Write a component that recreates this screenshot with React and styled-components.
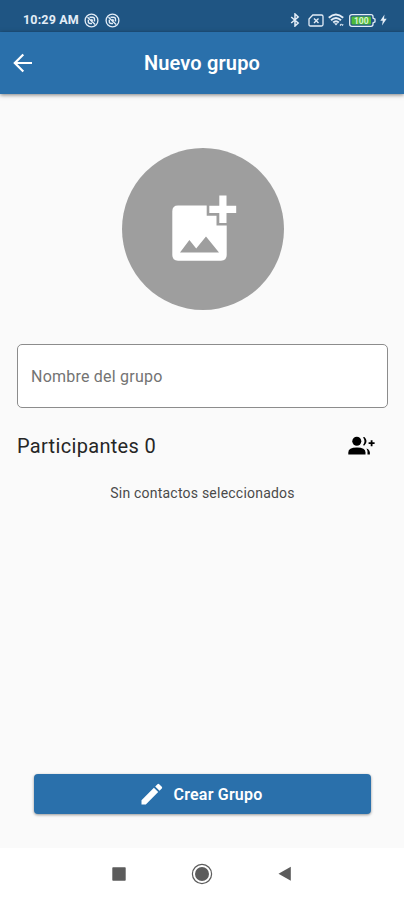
import React from "react";
import styled, { createGlobalStyle } from "styled-components";

const GlobalStyle = createGlobalStyle`
    * {
        box-sizing: border-box;
    }

    body {
        margin: 0;
        background: #fafafa;
        font-family: Roboto, "Liberation Sans", sans-serif;
    }
`;

const Screen = styled.div`
    display: flex;
    flex-direction: column;
    width: 100%;
    height: 900px;
    background: #fafafa;
    overflow: hidden;
`;

const StatusBar = styled.div`
    display: flex;
    align-items: center;
    justify-content: space-between;
    flex: none;
    height: 32px;
    padding: 8px 17px 0 23px;
    background: #1f5583;
    color: #e3edf7;
`;

const StatusGroup = styled.div`
    display: flex;
    align-items: center;
    gap: ${props => props.gap}px;
`;

const Time = styled.span`
    font-size: 12.5px;
    font-weight: 700;
    line-height: 16px;
    letter-spacing: 0.15px;
`;

const Header = styled.header`
    display: grid;
    grid-template-columns: 46px 1fr 46px;
    align-items: center;
    flex: none;
    height: 62px;
    background: #2a70ab;
    box-shadow: 0 1px 4px rgba(0, 0, 0, 0.5);
    color: white;
`;

const IconButton = styled.button`
    display: flex;
    align-items: center;
    justify-content: center;
    padding: 0;
    border: none;
    background: none;
    color: inherit;
`;

const Title = styled.h1`
    margin: 0;
    font-size: 20px;
    font-weight: 600;
    line-height: 24px;
    letter-spacing: 0.15px;
    text-align: center;
`;

const Content = styled.main`
    display: flex;
    flex: 1;
    flex-direction: column;
    padding: 54px 16px 0 17px;
`;

const Avatar = styled.button`
    display: flex;
    align-items: center;
    justify-content: center;
    align-self: center;
    flex: none;
    width: 162px;
    height: 162px;
    padding: 0 0 2px 3px;
    border: none;
    border-radius: 50%;
    background: #9e9e9e;
`;

const NameInput = styled.input`
    width: 371px;
    height: 64px;
    margin-top: 34px;
    padding: 0 13px;
    border: 1px solid #8c8c8c;
    border-radius: 5px;
    background: white;
    font-family: inherit;
    font-size: 16px;
    letter-spacing: 0.22px;

    &::placeholder {
        color: #737373;
        opacity: 1;
    }
`;

const Participants = styled.div`
    display: flex;
    align-items: center;
    justify-content: space-between;
    height: 28px;
    margin-top: 24px;
    padding-right: 13px;
`;

const Subtitle = styled.h2`
    margin: 0;
    color: #262626;
    font-size: 20px;
    font-weight: 400;
    line-height: 28px;
    letter-spacing: 0.32px;
`;

const Empty = styled.p`
    margin: 23px 0 0;
    color: #4a4a4a;
    font-size: 14px;
    line-height: 20px;
    letter-spacing: 0.22px;
    text-align: center;
`;

const CreateButton = styled.button`
    display: flex;
    align-items: center;
    justify-content: center;
    gap: 11px;
    width: 337px;
    height: 40px;
    margin: auto 0 34px 17px;
    padding: 0 2px 0 0;
    border: none;
    border-radius: 4px;
    background: #2a70ab;
    box-shadow: 0 1px 3px rgba(0, 0, 0, 0.4);
    color: white;
    font-family: inherit;
    font-size: 16px;
    font-weight: 600;
    letter-spacing: 0.2px;
`;

const NavBar = styled.nav`
    display: flex;
    align-items: center;
    justify-content: center;
    gap: 65px;
    flex: none;
    height: 52px;
    background: white;
    color: #5c5c5c;
`;

const BlockedIcon = () => (
    <svg width="15" height="15" viewBox="0 0 15 15" fill="none" stroke="currentColor">
        <circle cx="7.5" cy="7.5" r="6.4" strokeWidth="1.3" />
        <path d="M3.5 4.2l7.600 7.200M5.500 4.200h3q2 0 2 2v2.300M4.300 6.700v1.800q0 2 2 2h1.700M7.300 6.300l1.500 1.500" strokeWidth="1.4" />
    </svg>
);

const BluetoothIcon = () => (
    <svg width="14" height="14" viewBox="0 0 14 14" fill="none" stroke="currentColor" strokeWidth="1.5">
        <path d="M1.2 4l7 6L5 13V1l3.2 3-7 6" />
    </svg>
);

const SimIcon = () => (
    <svg width="16" height="13" viewBox="0 0 16 13" fill="none" stroke="currentColor">
        <path d="M4.8 1h8.7q1.5 0 1.5 1.5v8q0 1.5-1.5 1.5h-11Q1 12 1 10.500V5z" strokeWidth="1.3" />
        <path d="M6 4.500l4.500 4.500M10.500 4.500L6 9" strokeWidth="1.4" />
    </svg>
);

const WifiIcon = () => (
    <svg width="17" height="14" viewBox="0 0 17 14" fill="none" stroke="currentColor">
        <path d="M.8 4.800q7-6.500 14.400 0M3 7.200q5-4.600 10 0M5.200 9.500q2.800-2.500 5.600 0" strokeWidth="1.9" />
        <path d="M6 10.200h4l-2 2.400z" fill="currentColor" stroke="none" />
        <path d="M12 12.500l1.500-1.500M14 12.500l1.200-1.200" strokeWidth="1.200" />
    </svg>
);

const BatteryIcon = () => (
    <svg width="27" height="13" viewBox="0 0 27 13">
        <path d="M3 .7h19q2 0 2 2v1.500l2 1v2.600l-2 1v1.500q0 2-2 2H3q-2.300 0-2.300-2V2.700Q.7.7 3 .7z" fill="none" stroke="currentColor" strokeWidth="1.300" />
        <rect x="2.500" y="2.500" width="19.500" height="8" rx="1" fill="#4dbb3b" />
        <text x="12.300" y="9.500" textAnchor="middle" fill="#d9f2d2" fontFamily="Roboto" fontSize="8.500" fontWeight="700">100</text>
    </svg>
);

const BoltIcon = () => (
    <svg width="7" height="12" viewBox="0 0 7 12" fill="currentColor">
        <path d="M4.500.5L.3 6.800h2.500L2 11.500l4.700-6.700H4z" />
    </svg>
);

const BackIcon = () => (
    <svg width="20" height="20" viewBox="0 0 20 20" fill="none" stroke="currentColor" strokeWidth="2.200">
        <path d="M19 10H2.500M10.300 1.500L1.800 10l8.500 8.500" />
    </svg>
);

const AddImageIcon = () => (
    <svg width="65" height="66" viewBox="0 0 65 66">
        <path
            d="M6 10.500h28.700v10.200h9.800v9.800h10.200V60q0 5.700-5.700 5.700H6Q.3 65.700.3 60V16.200q0-5.700 5.700-5.700zM8 57.600h39L34 41.500l-9.800 12-6.800-8.500z"
            fill="white"
            fillRule="evenodd"
        />
        <path d="M47.300.5h7.200v10.200h9.700V18h-9.700v10h-7.200V18h-10v-7.300h10z" fill="white" />
    </svg>
);

const AddContactIcon = () => (
    <svg width="27" height="20" viewBox="0 0 27 20" fill="black">
        <circle cx="8.800" cy="5.200" r="4.500" />
        <path d="M.3 18.600v-2.200q0-4.800 8.600-4.800t8.600 4.800v2.200z" />
        <path d="M15 1.200q3 3.800 0 8l1.400.3q4.400-4.300 0-8.600zM18.500 12.500q4 1.300 3.400 6.100h-2.400q.6-3.800-1-6.100z" />
        <path d="M23.600 4.200v6M20.600 7.200h6" fill="none" stroke="black" strokeWidth="1.800" />
    </svg>
);

const PencilIcon = () => (
    <svg width="22" height="22" viewBox="0 0 22 22" fill="currentColor">
        <path d="M.5 17.200V21.500h4.300L17.200 9.100l-4.300-4.300zM20.800 5.500q.8-.8 0-1.700l-2.600-2.600q-.9-.8-1.700 0l-2.300 2.300 4.300 4.300z" />
    </svg>
);

const SquareIcon = () => (
    <svg width="14" height="14" viewBox="0 0 14 14" fill="currentColor">
        <rect x=".3" y=".3" width="13.400" height="13.400" rx=".7" />
    </svg>
);

const HomeIcon = () => (
    <svg width="22" height="22" viewBox="0 0 22 22" fill="currentColor">
        <circle cx="11" cy="11" r="9.600" fill="none" stroke="currentColor" strokeWidth="1.200" />
        <circle cx="11" cy="11" r="7" />
    </svg>
);

const TriangleIcon = () => (
    <svg width="14" height="16" viewBox="0 0 14 16" fill="currentColor">
        <path d="M12.800.8v14L.5 7.800z" />
    </svg>
);

export default () => (
    <>
        <GlobalStyle />
        <Screen>
            <StatusBar>
                <StatusGroup gap={5.5}>
                    <Time>10:29 AM</Time>
                    <BlockedIcon />
                    <BlockedIcon />
                </StatusGroup>
                <StatusGroup gap={4}>
                    <BluetoothIcon />
                    <SimIcon />
                    <WifiIcon />
                    <BatteryIcon />
                    <BoltIcon />
                </StatusGroup>
            </StatusBar>
            <Header>
                <IconButton aria-label="Volver"><BackIcon /></IconButton>
                <Title>Nuevo grupo</Title>
            </Header>
            <Content>
                <Avatar aria-label="Agregar imagen"><AddImageIcon /></Avatar>
                <NameInput placeholder="Nombre del grupo" />
                <Participants>
                    <Subtitle>Participantes 0</Subtitle>
                    <IconButton aria-label="Agregar participantes"><AddContactIcon /></IconButton>
                </Participants>
                <Empty>Sin contactos seleccionados</Empty>
                <CreateButton>
                    <PencilIcon />
                    Crear Grupo
                </CreateButton>
            </Content>
            <NavBar>
                <SquareIcon />
                <HomeIcon />
                <TriangleIcon />
            </NavBar>
        </Screen>
    </>
);
